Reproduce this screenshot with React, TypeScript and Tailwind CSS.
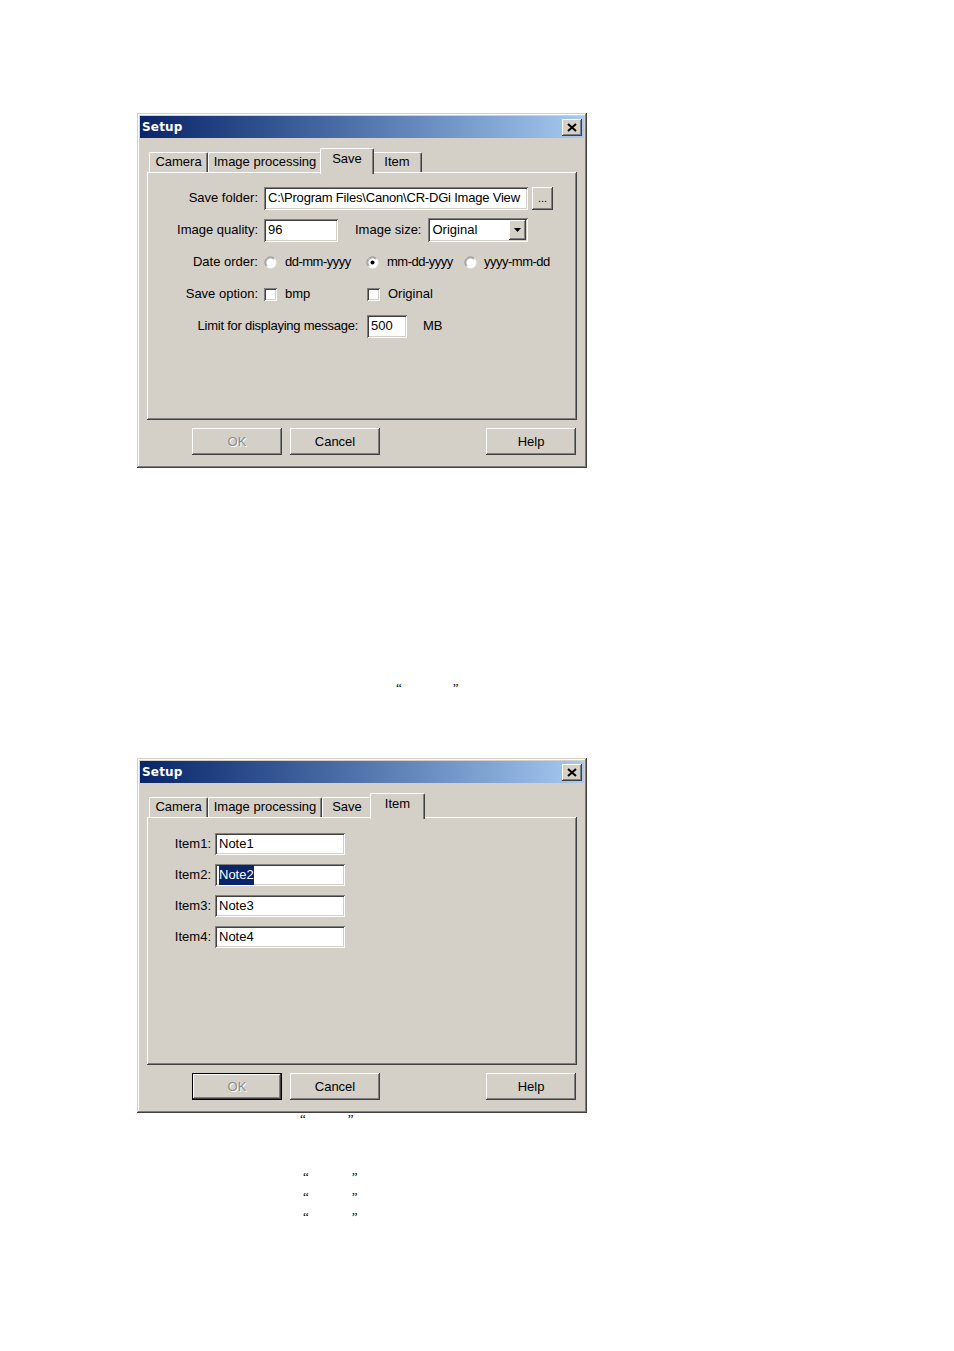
import React from "react";

// Win2000 style bevels
const winFrame =
  "shadow-[inset_-1px_-1px_#404040,inset_1px_1px_#d4d0c8,inset_-2px_-2px_#808080,inset_2px_2px_#ffffff]";
const raised =
  "shadow-[inset_-1px_-1px_#404040,inset_1px_1px_#ffffff,inset_-2px_-2px_#808080,inset_2px_2px_#d4d0c8]";
const sunken =
  "shadow-[inset_1px_1px_#808080,inset_-1px_-1px_#ffffff,inset_2px_2px_#404040,inset_-2px_-2px_#d4d0c8]";
const panelEdge =
  "shadow-[inset_-1px_-1px_#404040,inset_1px_1px_#ffffff,inset_-2px_-2px_#808080]";

const tabs = [
  { label: "Camera", w: "w-[59px]", wSel: "w-[63px]" },
  { label: "Image processing", w: "w-[114px]", wSel: "w-[118px]" },
  { label: "Save", w: "w-[50px]", wSel: "w-[54px]" },
  { label: "Item", w: "w-[50px]", wSel: "w-[55px]" },
];

function CloseIcon() {
  return (
    <svg width="10" height="9" viewBox="0 0 10 9">
      <path d="M1 1 L9 8 M9 1 L1 8" stroke="#000" strokeWidth="2" />
    </svg>
  );
}

function TitleBar() {
  return (
    <div className="h-[22px] flex items-center bg-linear-to-r from-[#0a246a] to-[#a6caf0] pl-[2px] pr-[2px]">
      <span className="font-['DejaVu_Sans',sans-serif] font-bold text-[12px] text-white tracking-[0.2px]">
        Setup
      </span>
      <div className={`ml-auto w-[20px] h-[17px] bg-[#d4d0c8] flex items-center justify-center ${raised}`}>
        <CloseIcon />
      </div>
    </div>
  );
}

function TabStrip({ active }: { active: string }) {
  return (
    <div className="flex items-end h-[24px] pl-[2px]">
      {tabs.map((t) => {
        const sel = t.label === active;
        return (
          <div
            key={t.label}
            className={
              sel
                ? `${t.wSel} h-[26px] -mb-[2px] -mx-[2px] relative z-10 bg-[#d4d0c8] border-t border-l border-white border-r border-r-[#404040] rounded-t-[2px] shadow-[inset_-1px_0_#808080] flex justify-center pt-[2px] text-[13px] leading-[16px]`
                : `${t.w} h-[20px] bg-[#d4d0c8] border-t border-l border-white border-r border-r-[#404040] rounded-t-[2px] shadow-[inset_-1px_0_#808080] flex justify-center pt-[1px] text-[13px] leading-[16px]`
            }
          >
            {t.label}
          </div>
        );
      })}
    </div>
  );
}

function Button({
  children,
  className = "",
  disabled = false,
  isDefault = false,
}: {
  children: React.ReactNode;
  className?: string;
  disabled?: boolean;
  isDefault?: boolean;
}) {
  return (
    <div
      className={`w-[90px] h-[27px] bg-[#d4d0c8] flex items-center justify-center text-[13px] ${
        isDefault ? "border border-black" : ""
      } ${raised} ${className}`}
    >
      <span className={disabled ? "text-[#8a8a8a] [text-shadow:1px_1px_0_#ffffff]" : "text-black"}>{children}</span>
    </div>
  );
}

function TextBox({ className, children }: { className: string; children?: React.ReactNode }) {
  return (
    <div className={`bg-white flex items-center pl-[4px] text-[13px] whitespace-nowrap overflow-hidden ${sunken} ${className}`}>
      {children}
    </div>
  );
}

function Radio({ checked = false }: { checked?: boolean }) {
  return (
    <svg width="13" height="13" viewBox="0 0 13 13" className="shrink-0">
      <circle cx="6.5" cy="6.5" r="5.5" fill="#ffffff" />
      <path d="M2.61 10.39 A5.5 5.5 0 0 1 10.39 2.61" fill="none" stroke="#808080" />
      <path d="M10.39 2.61 A5.5 5.5 0 0 1 2.61 10.39" fill="none" stroke="#ffffff" />
      <path d="M3.32 9.68 A4.5 4.5 0 0 1 9.68 3.32" fill="none" stroke="#a8a8a8" />
      {checked && <circle cx="6.5" cy="6.5" r="2" fill="#000" />}
    </svg>
  );
}

function Check() {
  return <div className={`w-[13px] h-[13px] shrink-0 bg-white ${sunken}`} />;
}

function Dialog({
  active,
  okDefault = false,
  children,
}: {
  active: string;
  okDefault?: boolean;
  children: React.ReactNode;
}) {
  return (
    <div className={`w-[450px] h-[355px] bg-[#d4d0c8] p-[3px] flex flex-col ${winFrame}`}>
      <TitleBar />
      <div className="flex flex-col px-[7px] pt-[10px]">
        <TabStrip active={active} />
        <div className={`h-[248px] ${panelEdge}`}>{children}</div>
        <div className="flex mt-[8px]">
          <Button className="ml-[45px]" disabled isDefault={okDefault}>
            OK
          </Button>
          <Button className="ml-[8px]">Cancel</Button>
          <Button className="ml-auto mr-[1px]">Help</Button>
        </div>
      </div>
    </div>
  );
}

function SaveTab() {
  return (
    <div className="flex flex-col gap-[8px] pt-[14px] text-[13px]">
      <div className="flex items-center h-[24px]">
        <div className="w-[111px] text-right">Save folder:</div>
        <TextBox className="ml-[6px] w-[264px] h-[23px] tracking-[-0.2px]">C:\Program Files\Canon\CR-DGi Image View</TextBox>
        <div className={`ml-[4px] w-[21px] h-[23px] bg-[#d4d0c8] flex items-center justify-center text-[11px] ${raised}`}>
          ...
        </div>
      </div>
      <div className="flex items-center h-[24px]">
        <div className="w-[111px] text-right">Image quality:</div>
        <TextBox className="ml-[6px] w-[74px] h-[23px]">96</TextBox>
        <div className="ml-[17px]">Image size:</div>
        <div className={`ml-[7px] w-[100px] h-[24px] bg-white flex p-[2px] ${sunken}`}>
          <div className="flex-1 flex items-center pl-[2px]">Original</div>
          <div className={`w-[17px] h-full bg-[#d4d0c8] flex items-center justify-center ${raised}`}>
            <svg width="7" height="4" viewBox="0 0 7 4">
              <path d="M0 0 H7 L3.5 4 Z" fill="#000" />
            </svg>
          </div>
        </div>
      </div>
      <div className="flex items-center h-[24px]">
        <div className="w-[111px] text-right">Date order:</div>
        <div className="ml-[6px] w-[102px] flex items-center">
          <Radio />
          <span className="ml-[8px] tracking-[-0.5px]">dd-mm-yyyy</span>
        </div>
        <div className="w-[98px] flex items-center">
          <Radio checked />
          <span className="ml-[8px] tracking-[-0.5px]">mm-dd-yyyy</span>
        </div>
        <div className="flex items-center">
          <Radio />
          <span className="ml-[7px] tracking-[-0.5px]">yyyy-mm-dd</span>
        </div>
      </div>
      <div className="flex items-center h-[24px]">
        <div className="w-[111px] text-right">Save option:</div>
        <div className="ml-[6px] w-[103px] flex items-center">
          <Check />
          <span className="ml-[8px]">bmp</span>
        </div>
        <div className="flex items-center">
          <Check />
          <span className="ml-[8px]">Original</span>
        </div>
      </div>
      <div className="flex items-center h-[24px]">
        <div className="w-[211px] text-right tracking-[-0.25px]">Limit for displaying message:</div>
        <TextBox className="ml-[9px] w-[40px] h-[23px]">500</TextBox>
        <div className="ml-[16px]">MB</div>
      </div>
    </div>
  );
}

function ItemTab() {
  const rows = ["Note1", "Note2", "Note3", "Note4"];
  return (
    <div className="flex flex-col gap-[9px] pt-[16px] text-[13px]">
      {rows.map((note, i) => (
        <div key={note} className="flex items-center h-[22px]">
          <div className="w-[64px] text-right">Item{i + 1}:</div>
          <TextBox className="ml-[4px] w-[130px] h-[22px]">
            {i === 1 ? <span className="bg-[#0a246a] text-white">{note}</span> : note}
          </TextBox>
        </div>
      ))}
    </div>
  );
}

function Quotes({ className }: { className: string }) {
  return (
    <div className={`h-[16px] flex items-center font-['Liberation_Serif',serif] text-[13px] text-black ${className}`}>
      {"“"}
      <span className="ml-[51px]">{"”"}</span>
    </div>
  );
}

export default function App() {
  return (
    <div className="w-[954px] min-h-[1351px] bg-white pt-[113px] font-['Liberation_Sans',Arial,sans-serif] text-black">
      <div className="ml-[137px]">
        <Dialog active="Save">
          <SaveTab />
        </Dialog>
      </div>
      <Quotes className="mt-[212px] pl-[396px]" />
      <div className="ml-[137px] mt-[62px]">
        <Dialog active="Item" okDefault>
          <ItemTab />
        </Dialog>
      </div>
      <div className="h-[12px] flex items-center pl-[300px] font-['Liberation_Serif',serif] text-[13px]">
        {"“"}
        <span className="ml-[42px]">{"”"}</span>
      </div>
      <div className="mt-[44px] flex flex-col gap-[4px] pl-[303px] font-['Liberation_Serif',serif] text-[13px]">
        {[0, 1, 2].map((k) => (
          <div key={k} className="h-[16px] flex items-center">
            {"“"}
            <span className="ml-[43px]">{"”"}</span>
          </div>
        ))}
      </div>
    </div>
  );
}
